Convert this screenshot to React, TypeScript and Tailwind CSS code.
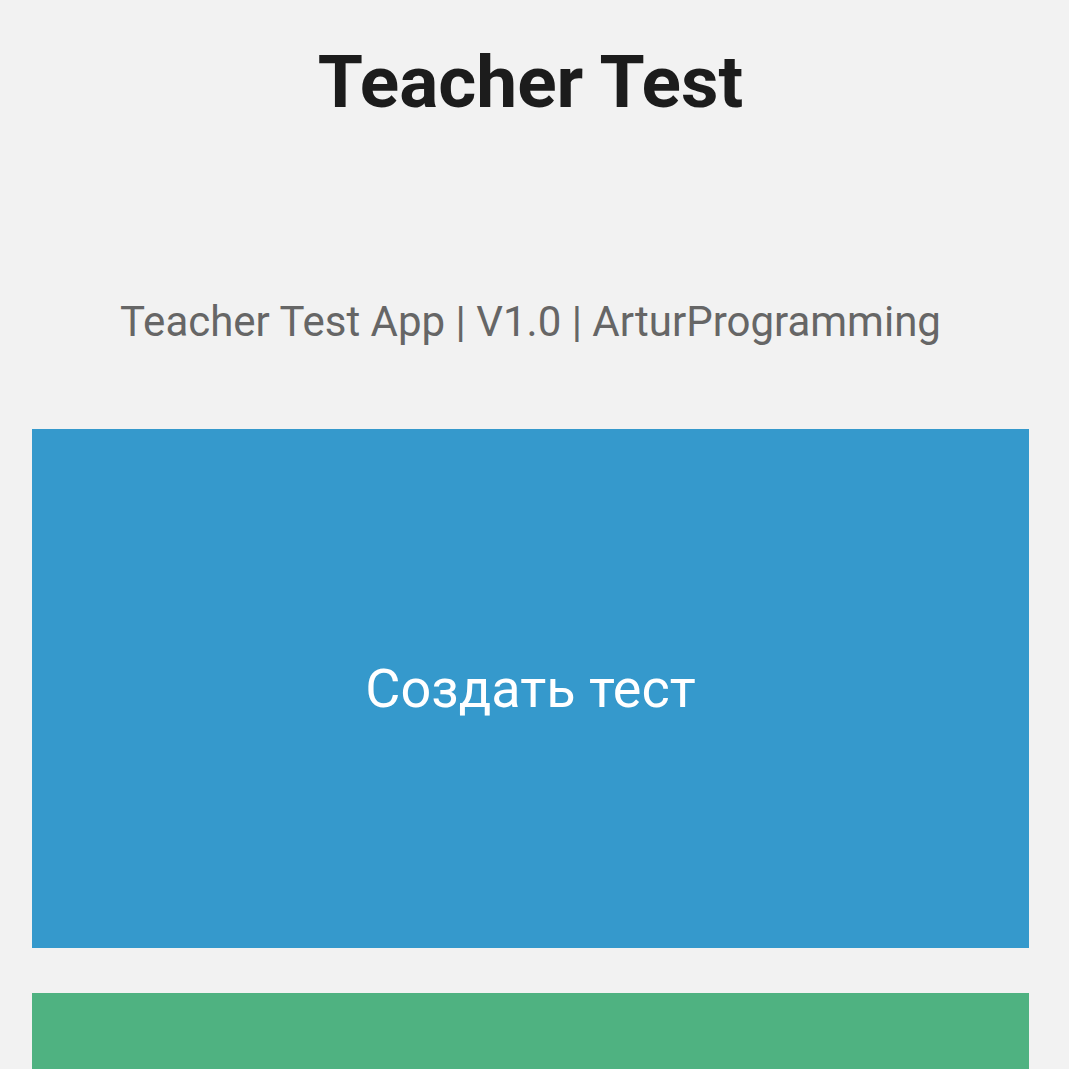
export default function App() {
  return (
    <div className="h-[1069px] bg-[#f2f2f2] font-['Roboto',sans-serif] overflow-hidden">
      <div className="ml-8 w-[997px] flex flex-col items-center">
        <h1 className="mt-[38px] text-[73px] leading-[88px] font-bold text-[#1c1c1c]">Teacher Test</h1>
        <p className="mt-[171px] text-[42px] leading-[50px] text-[#666666]">
          Teacher Test App | V1.0 | ArturProgramming
        </p>
        <button className="mt-[82px] w-full h-[519px] bg-[#3599cc] text-white text-[54px]">
          Создать тест
        </button>
        <div className="mt-[45px] w-full h-[519px] bg-[#4fb281]" />
      </div>
    </div>
  );
}
